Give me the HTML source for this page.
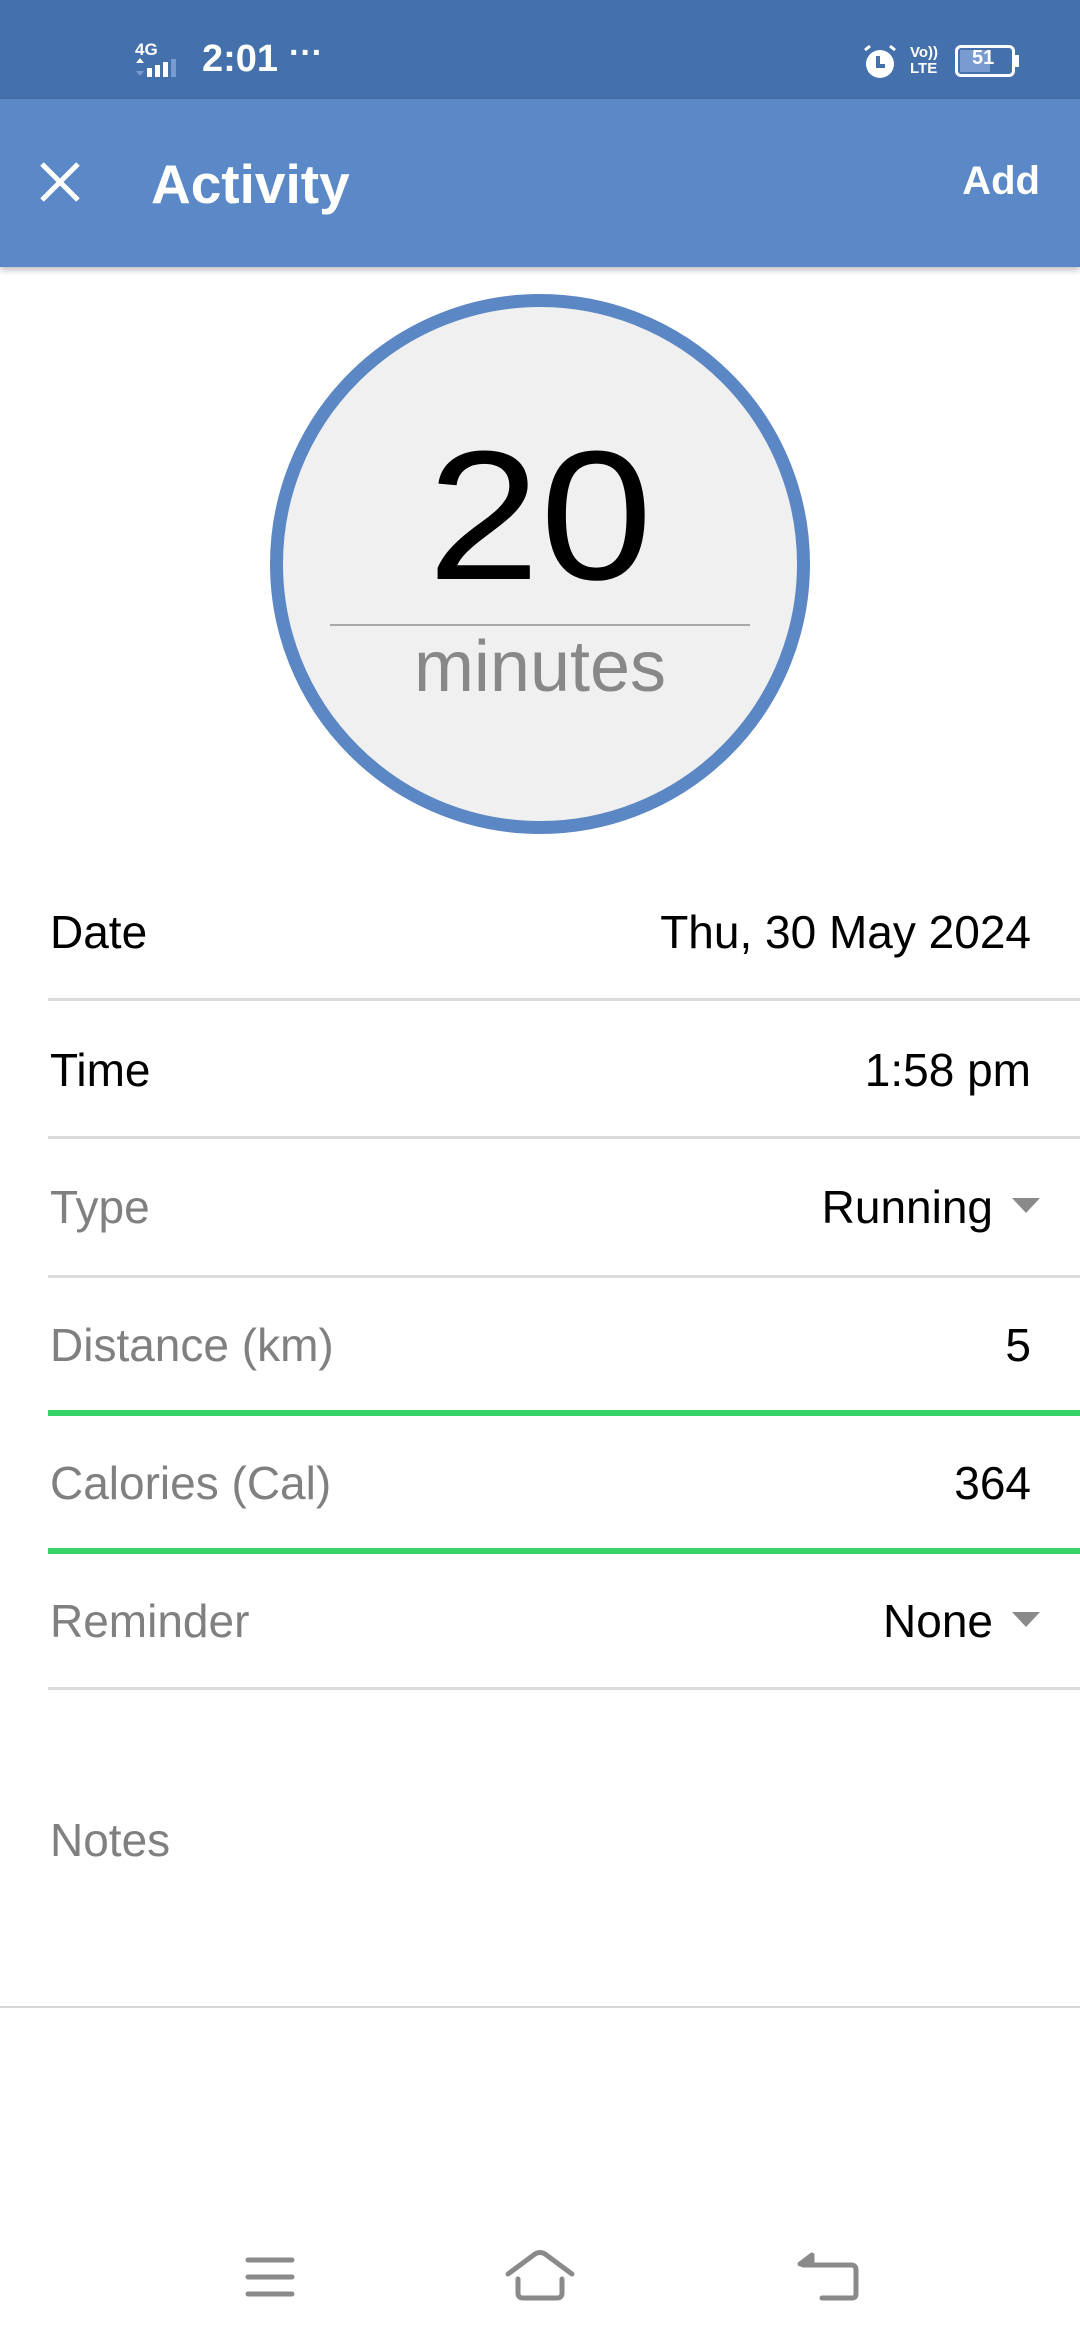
<!DOCTYPE html>
<html><head><meta charset="utf-8"><style>
*{margin:0;padding:0;box-sizing:border-box}
body{width:1080px;height:2340px;background:#fff;position:relative;overflow:hidden;font-family:"Liberation Sans",sans-serif}
.a{position:absolute;white-space:nowrap}
.lab{left:50px;font-size:46px;line-height:1}
.val{right:49px;font-size:46px;line-height:1;color:#000}
.sep{position:absolute;left:48px;right:0;height:3px;background:#dcdcdc}
.grn{position:absolute;left:48px;right:0;height:6px;background:#36d468}
.tri{position:absolute;width:0;height:0;border-left:14px solid transparent;border-right:14px solid transparent;border-top:15px solid #8a8a8a}
</style></head><body>
<div class="a" style="left:0;top:0;width:1080px;height:99px;background:#4470ab"></div>
<div class="a" style="left:0;top:99px;width:1080px;height:168px;background:#5b88c6;box-shadow:0 3px 6px rgba(0,0,0,.25)"></div>
<!-- status -->
<div class="a" style="left:135px;top:40px;color:#fff;font-size:17px;font-weight:bold">4G</div>
<svg class="a" style="left:135px;top:56px" width="50" height="22"><path d="M5 2l4 5H1z" fill="#fff"/><path d="M5 20l4-5H1z" fill="#7a9bd0"/><rect x="12" y="12" width="5" height="9" fill="#fff"/><rect x="20" y="9" width="5" height="12" fill="#fff"/><rect x="28" y="6" width="5" height="15" fill="#fff"/><rect x="36" y="3" width="5" height="18" fill="#7a9bd0"/></svg>
<div class="a" style="left:202px;top:38px;color:#fff;font-size:38px;font-weight:bold">2:01</div>
<div class="a" style="left:289px;top:34px;color:#fff;font-size:34px;font-weight:bold">···</div>
<svg class="a" style="left:862px;top:44px" width="36" height="36"><circle cx="18" cy="20" r="14" fill="#fff"/><path d="M16 12v10h7" stroke="#4470ab" stroke-width="4" fill="none"/><path d="M3 6l5-4M33 6l-5-4" stroke="#fff" stroke-width="3"/></svg>
<div class="a" style="left:910px;top:45px;color:#fff;font-size:15px;font-weight:bold;line-height:16px">Vo))<br>LTE</div>
<div class="a" style="left:955px;top:45px;width:60px;height:32px;border:3px solid #fff;border-radius:6px"></div>
<div class="a" style="left:960px;top:50px;width:30px;height:22px;background:#7a9bd0"></div>
<div class="a" style="left:1015px;top:55px;width:4px;height:12px;background:#fff"></div>
<div class="a" style="left:972px;top:47px;color:#fff;font-size:20px;font-weight:bold">51</div>
<!-- toolbar -->
<svg class="a" style="left:38px;top:160px" width="44" height="44"><path d="M4 4L40 40M40 4L4 40" stroke="#fff" stroke-width="5"/></svg>
<div class="a" style="left:151px;top:157px;color:#fff;font-size:55px;font-weight:bold;line-height:1">Activity</div>
<div class="a" style="right:40px;top:161px;color:#fff;font-size:40px;font-weight:bold;line-height:1">Add</div>
<!-- circle -->
<div class="a" style="left:270px;top:294px;width:540px;height:540px;border-radius:50%;background:#f0f0f0;border:13px solid #5b87c5"></div>
<div class="a" style="left:340px;width:400px;top:423px;text-align:center;font-size:184px;line-height:1;color:#000;transform:scaleX(1.1)">20</div>
<div class="a" style="left:330px;top:624px;width:420px;height:2px;background:#a8a8a8"></div>
<div class="a" style="left:300px;width:480px;top:631px;text-align:center;font-size:72px;line-height:1;color:#888">minutes</div>
<!-- rows -->
<div class="a lab" style="top:909px;color:#000">Date</div>
<div class="a val" style="top:909px">Thu, 30 May 2024</div>
<div class="sep" style="top:998px"></div>
<div class="a lab" style="top:1047px;color:#000">Time</div>
<div class="a val" style="top:1047px">1:58 pm</div>
<div class="sep" style="top:1136px"></div>
<div class="a lab" style="top:1184px;color:#808080">Type</div>
<div class="a val" style="top:1184px;right:87px">Running</div>
<div class="tri" style="left:1012px;top:1198px"></div>
<div class="sep" style="top:1275px"></div>
<div class="a lab" style="top:1322px;color:#808080">Distance (km)</div>
<div class="a val" style="top:1322px">5</div>
<div class="grn" style="top:1410px"></div>
<div class="a lab" style="top:1460px;color:#808080">Calories (Cal)</div>
<div class="a val" style="top:1460px">364</div>
<div class="grn" style="top:1548px"></div>
<div class="a lab" style="top:1598px;color:#808080">Reminder</div>
<div class="a val" style="top:1598px;right:87px">None</div>
<div class="tri" style="left:1012px;top:1612px"></div>
<div class="sep" style="top:1687px"></div>
<div class="a lab" style="top:1817px;color:#808080">Notes</div>
<div class="a" style="left:0;right:0;top:2006px;height:2px;background:#d6d6d6"></div>
<!-- nav -->
<svg class="a" style="left:0;top:2240px" width="1080" height="80" fill="none" stroke="#8a8a8a" stroke-width="5" stroke-linecap="round" stroke-linejoin="round">
<path d="M248 20h44M248 37h44M248 54h44"/>
<path d="M508 34l27-20q5-3 10 0l27 20M518 39v14q0 5 5 5h34q5 0 5-5v-14"/>
<path d="M803 25h48q5 0 5 5v24q0 4-4 4h-30"/>
<path d="M800 24l12-9v9z" fill="#8a8a8a"/>
</svg>
</body></html>
